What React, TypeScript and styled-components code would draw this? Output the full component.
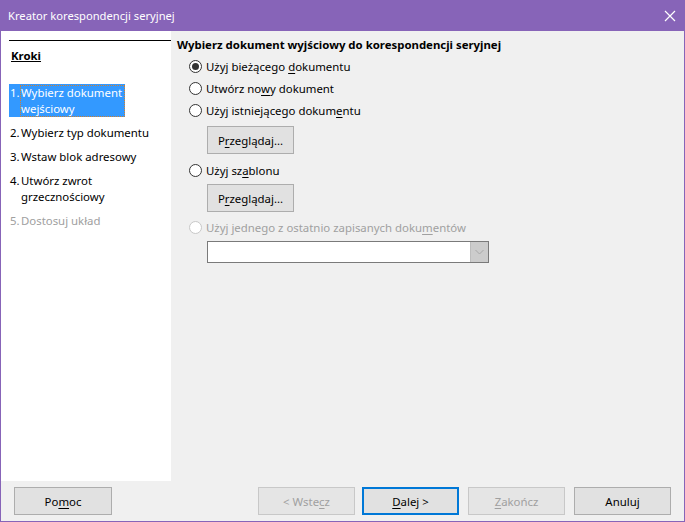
import React from 'react';
import styled, { createGlobalStyle } from 'styled-components';

const GlobalStyle = createGlobalStyle`
  html, body {
    margin: 0;
    padding: 0;
    width: 685px;
    height: 522px;
    overflow: hidden;
  }
  body {
    font-family: "Noto Sans", "Open Sans", sans-serif;
    font-size: 11.4px;
    color: #000;
  }
`;

const Window = styled.div`
  width: 685px;
  height: 522px;
  box-sizing: border-box;
  display: flex;
  flex-direction: column;
  background: #f0f0f0;
  border: 1px solid #8764b8;
  border-top: none;
`;

const TitleBar = styled.div`
  height: 31px;
  flex-shrink: 0;
  margin: 0 -1px;
  background: #8764b8;
  color: #fff;
  display: flex;
  align-items: center;
  justify-content: space-between;
  padding: 0 9px 0 8px;
  font-size: 11.2px;
`;

const Body = styled.div`
  flex: 1;
  display: flex;
`;

const Sidebar = styled.div`
  width: 170px;
  background: #fff;
  padding: 9px 0 0 8px;
  box-sizing: border-box;
`;

const SideRule = styled.div`
  height: 1px;
  background: #000;
`;

const SideTitle = styled.div`
  font-weight: bold;
  text-decoration: underline;
  margin: 6px 0 0 2px;
  line-height: 18px;
`;

const Steps = styled.div`
  margin-top: 19px;
  display: flex;
  flex-direction: column;
  gap: 8px;
`;

const Step = styled.div<{ $active?: boolean; $disabled?: boolean }>`
  display: flex;
  width: ${(p) => (p.$active ? '116px' : '160px')};
  padding: ${(p) => (p.$active ? '1px 0 0 1px' : '0 0 0 1px')};
  line-height: 16px;
  box-sizing: border-box;
  background: ${(p) => (p.$active ? '#3399ff' : 'transparent')};
  color: ${(p) => (p.$active ? '#fff' : p.$disabled ? '#a0a0a0' : '#000')};
`;

const StepNum = styled.span`
  width: 10px;
  flex-shrink: 0;
`;

const StepText = styled.span<{ $focus?: boolean }>`
  flex: 1;
  outline: ${(p) => (p.$focus ? '1px dotted #d08030' : 'none')};
  outline-offset: -1px;
  padding: 0 1px;
`;

const Main = styled.div`
  flex: 1;
  padding: 6px 0 0 6px;
`;

const Heading = styled.div`
  font-weight: bold;
  line-height: 16px;
`;

const Options = styled.div`
  padding-left: 12px;
  margin-top: 2px;
  display: flex;
  flex-direction: column;
`;

const RadioRow = styled.label<{ $disabled?: boolean }>`
  display: flex;
  align-items: center;
  gap: 4px;
  height: 22px;
  color: ${(p) => (p.$disabled ? '#a0a0a0' : '#000')};
`;

const RadioDot = styled.span<{ $checked?: boolean; $disabled?: boolean }>`
  width: 11px;
  height: 11px;
  border-radius: 50%;
  border: 1px solid ${(p) => (p.$disabled ? '#c8c8c8' : '#333')};
  background: #fff;
  display: flex;
  align-items: center;
  justify-content: center;
  &::after {
    content: '';
    width: 7px;
    height: 7px;
    border-radius: 50%;
    background: ${(p) => (p.$checked ? '#333' : 'transparent')};
  }
`;

const Indented = styled.div<{ $top: number; $bottom: number }>`
  padding: ${(p) => p.$top}px 0 ${(p) => p.$bottom}px 18px;
`;

const Button = styled.button<{ $default?: boolean; $width?: number }>`
  font-family: inherit;
  font-size: 11.4px;
  width: ${(p) => p.$width ?? 87}px;
  height: 28px;
  background: #e1e1e1;
  color: #000;
  border: ${(p) => (p.$default ? '2px solid #0078d7' : '1px solid #adadad')};
  padding: 0;
  &:disabled {
    color: #a0a0a0;
    background: #e5e5e5;
    border-color: #c8c8c8;
  }
`;

const Combo = styled.div`
  margin: 3px 0 0 18px;
  width: 282px;
  height: 22px;
  box-sizing: border-box;
  border: 1px solid #7a7a7a;
  background: #fff;
  display: flex;
  justify-content: flex-end;
`;

const ComboArrow = styled.div`
  width: 17px;
  background: #cccccc;
  border-left: 1px solid #bdbdbd;
  display: flex;
  align-items: center;
  justify-content: center;
`;

const Footer = styled.div`
  height: 40px;
  flex-shrink: 0;
  display: flex;
  align-items: center;
  padding: 0 13px;
`;

const FooterRight = styled.div`
  margin-left: auto;
  display: flex;
  gap: 9px;
  & > :first-child {
    margin-right: -2px;
  }
`;

const U = styled.u`
  text-underline-offset: 2px;
`;

export default function App() {
  return (
    <>
      <GlobalStyle />
      <Window>
        <TitleBar>
          <span>Kreator korespondencji seryjnej</span>
          <svg width="12" height="12" viewBox="0 0 12 12">
            <path d="M1 1 L11 11 M11 1 L1 11" stroke="#fff" strokeWidth="1.2" />
          </svg>
        </TitleBar>
        <Body>
          <Sidebar>
            <SideRule />
            <SideTitle>Kroki</SideTitle>
            <Steps>
              <Step $active>
                <StepNum>1.</StepNum>
                <StepText $focus>Wybierz dokument wejściowy</StepText>
              </Step>
              <Step>
                <StepNum>2.</StepNum>
                <StepText>Wybierz typ dokumentu</StepText>
              </Step>
              <Step>
                <StepNum>3.</StepNum>
                <StepText>Wstaw blok adresowy</StepText>
              </Step>
              <Step>
                <StepNum>4.</StepNum>
                <StepText>Utwórz zwrot grzecznościowy</StepText>
              </Step>
              <Step $disabled>
                <StepNum>5.</StepNum>
                <StepText>Dostosuj układ</StepText>
              </Step>
            </Steps>
          </Sidebar>
          <Main>
            <Heading>Wybierz dokument wyjściowy do korespondencji seryjnej</Heading>
            <Options>
              <RadioRow>
                <RadioDot $checked />
                <span>
                  Użyj bieżącego <U>d</U>okumentu
                </span>
              </RadioRow>
              <RadioRow>
                <RadioDot />
                <span>
                  Utwórz no<U>w</U>y dokument
                </span>
              </RadioRow>
              <RadioRow>
                <RadioDot />
                <span>
                  Użyj istniejącego dokum<U>e</U>ntu
                </span>
              </RadioRow>
              <Indented $top={5} $bottom={5}>
                <Button>
                  P<U>r</U>zeglądaj...
                </Button>
              </Indented>
              <RadioRow>
                <RadioDot />
                <span>
                  Użyj sz<U>a</U>blonu
                </span>
              </RadioRow>
              <Indented $top={3} $bottom={4}>
                <Button>
                  P<U>r</U>zeglądaj...
                </Button>
              </Indented>
              <RadioRow $disabled>
                <RadioDot $disabled />
                <span>
                  Użyj jednego z ostatnio zapisanych doku<U>m</U>entów
                </span>
              </RadioRow>
              <Combo>
                <ComboArrow>
                  <svg width="9" height="6" viewBox="0 0 9 6">
                    <path d="M0.5 1 L4.5 5 L8.5 1" stroke="#a8a8a8" fill="none" strokeWidth="1" />
                  </svg>
                </ComboArrow>
              </Combo>
            </Options>
          </Main>
        </Body>
        <Footer>
          <Button $width={98}>
            Po<U>m</U>oc
          </Button>
          <FooterRight>
            <Button $width={97} disabled>
              &lt; Wste<U>c</U>z
            </Button>
            <Button $width={97} $default>
              <U>D</U>alej &gt;
            </Button>
            <Button $width={97} disabled>
              <U>Z</U>akończ
            </Button>
            <Button $width={97}>Anuluj</Button>
          </FooterRight>
        </Footer>
      </Window>
    </>
  );
}
